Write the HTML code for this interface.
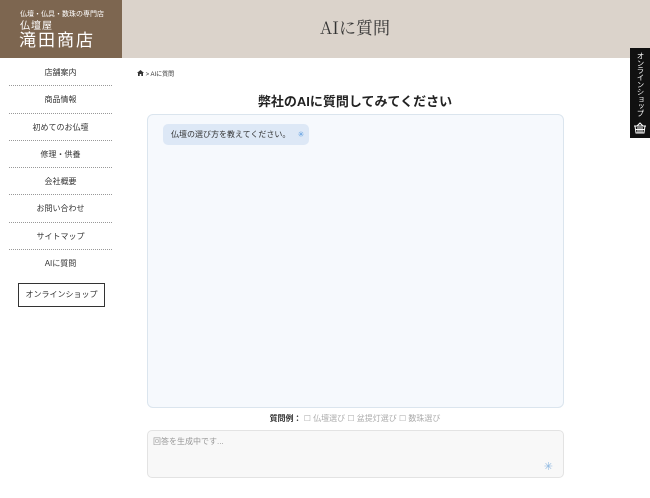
<!DOCTYPE html>
<html><head><meta charset="utf-8"><style>
*{margin:0;padding:0;box-sizing:border-box}
body{width:650px;height:498px;overflow:hidden;background:#fff;font-family:"Liberation Sans","Noto Sans CJK JP",sans-serif;position:relative;color:#333}
.logo{position:absolute;left:0;top:0;width:122px;height:58px;background:#7d6650;color:#fff}
.band{position:absolute;left:122px;top:0;width:528px;height:58px;background:#dbd3cb}
.title{position:absolute;left:255px;width:200px;top:0;text-align:center;font-family:"Noto Serif CJK SC","Liberation Serif",serif;font-weight:400;font-size:17px;line-height:54px;color:#333}
.nav{position:absolute;left:9px;top:59px;width:103px}
.nav div{height:27.3px;line-height:27px;text-align:center;font-size:8px;border-bottom:1px dotted #999;color:#333}
.nav div:last-child{border-bottom:none}
.shop{position:absolute;left:18px;top:283px;width:87px;height:24px;border:1px solid #333;font-size:8px;text-align:center;line-height:22px}
.tab{position:absolute;left:630px;top:48px;width:20px;height:90px;background:#111;color:#fff}
.tab span{position:absolute;left:5px;top:4px;writing-mode:vertical-rl;font-size:7.5px;letter-spacing:-0.3px}
</style></head><body>
<div class="logo">
<div style="position:absolute;left:20px;top:10px;font-size:7px;line-height:9px">仏壇・仏具・数珠の専門店</div>
<div style="position:absolute;left:20px;top:21px;font-size:10px;letter-spacing:1px;line-height:11px">仏壇屋</div>
<div style="position:absolute;left:19px;top:32px;font-size:17px;letter-spacing:2px;line-height:18px">滝田商店</div>
</div>
<div class="band"></div>
<div class="title">AIに質問</div>
<div class="nav"><div>店舗案内</div><div>商品情報</div><div>初めてのお仏壇</div><div>修理・供養</div><div>会社概要</div><div>お問い合わせ</div><div>サイトマップ</div><div>AIに質問</div></div>
<div class="shop">オンラインショップ</div>
<div class="tab"><span>オンラインショップ</span>
<svg style="position:absolute;left:3px;top:74px" width="14" height="12" viewBox="0 0 14 12" fill="none" stroke="#fff" stroke-width="1"><path d="M4 4L7 1L10 4M1 4h12M2 4l1 7h8l1-7M5 5v6M7 5v6M9 5v6M2.5 7.5h9"/></svg></div>
<div style="position:absolute;left:137px;top:69px;font-size:6px;color:#333"><svg width="7" height="6" viewBox="0 0 7 6"><path d="M3.5 0L7 3H6v3H4.3V4H2.7v2H1V3H0z" fill="#333"/></svg> &gt; AIに質問</div>
<div style="position:absolute;left:147px;top:91px;width:416px;text-align:center;font-size:13px;font-weight:bold;color:#222">弊社のAIに質問してみてください</div>
<div style="position:absolute;left:147px;top:114px;width:417px;height:294px;background:#f6f9fd;border:1px solid #dbe5ee;border-radius:6px"></div>
<div style="position:absolute;left:163px;top:124px;width:146px;height:21px;background:#dde8f6;border-radius:5px;font-size:8px;line-height:21px;padding-left:8px;color:#333">仏壇の選び方を教えてください。 <span style="color:#5a9be0;margin-left:5px">✳</span></div>
<div style="position:absolute;left:147px;top:413px;width:416px;text-align:center;font-size:8px;color:#aaa"><b style="color:#333">質問例：</b> ☐ 仏壇選び ☐ 盆提灯選び ☐ 数珠選び</div>
<div style="position:absolute;left:147px;top:430px;width:417px;height:48px;background:#f8f8f8;border:1px solid #e3e3e3;border-radius:5px;font-size:8px;color:#999;padding:5px 5px"><span>回答を生成中です...</span><span style="position:absolute;right:10px;bottom:4px;color:#8bb6e0;font-size:11px">✳</span></div>
</body></html>
